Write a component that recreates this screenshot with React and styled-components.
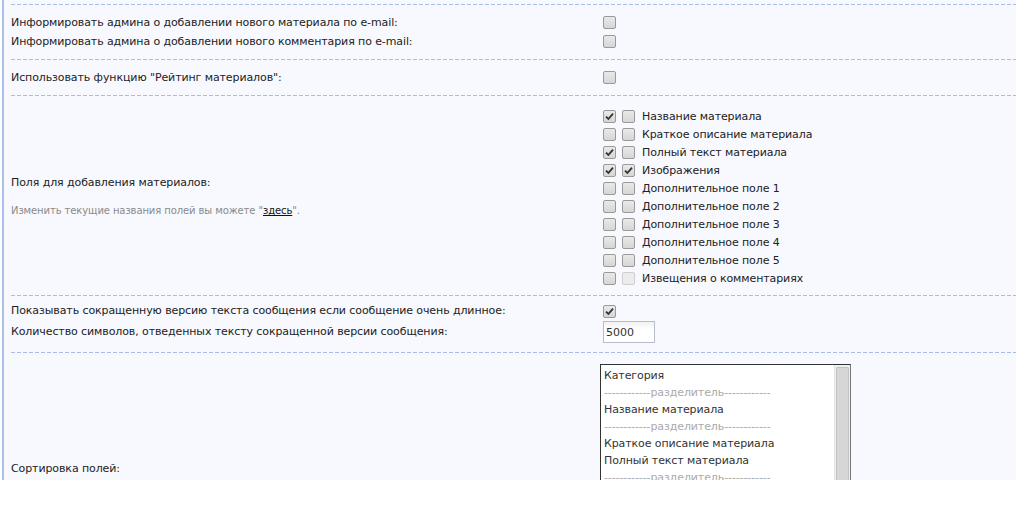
import styled, { createGlobalStyle } from "styled-components";

const Global = createGlobalStyle`
  html, body { margin: 0; padding: 0; background: #ffffff; }
  body {
    font-family: "DejaVu Sans", Verdana, sans-serif;
    font-size: 11px;
    letter-spacing: -0.1px;
    color: #222;
    overflow: hidden;
  }
`;

const Page = styled.div`
  margin-left: 2px;
  border-left: 2px solid #a9c0ea;
  background: #f7f9fe;
  padding-left: 7px;
  height: 480px;
  overflow: hidden;
  padding-top: 4px;
  box-sizing: border-box;
`;

const Section = styled.section`
  display: grid;
  grid-template-columns: 592px 1fr;
  align-items: center;
  padding: ${({ $pad }) => $pad || "9px 0 8px"};
  background-image: linear-gradient(to right, #a9bde8 4px, transparent 4px);
  background-size: 6px 1px;
  background-repeat: repeat-x;
  background-position: 0 0;
`;

const Row = styled.div`
  display: contents;
`;

const Label = styled.div`
  height: ${({ $h }) => $h || 19}px;
  line-height: ${({ $h }) => $h || 19}px;
  white-space: nowrap;
`;

const Cell = styled.div`
  height: ${({ $h }) => $h || 19}px;
  display: flex;
  align-items: center;
  gap: 6px;
`;

const LabelGroup = styled.div`
  display: flex;
  flex-direction: column;
  gap: 16px;
  margin-top: -2px;
`;

const Hint = styled.div`
  font-size: 10px;
  color: #8a8a8a;
  a { color: #111; text-decoration: underline; }
`;

const Box = styled.span`
  width: 11px;
  height: 11px;
  border: 1px solid ${({ $disabled }) => ($disabled ? "#cfcfcf" : "#9a9a9a")};
  border-radius: 2px;
  background: ${({ $disabled }) =>
    $disabled ? "#ececec" : "linear-gradient(#e9e9e9, #d6d6d6)"};
  display: inline-flex;
  align-items: center;
  justify-content: center;
  flex: none;
`;

const Check = ({ on, disabled }) => (
  <Box $disabled={disabled}>
    {on && (
      <svg width="9" height="9" viewBox="0 0 9 9">
        <path d="M1 4.6 L3.4 7 L8 1.6" fill="none" stroke="#333" strokeWidth="1.8" />
      </svg>
    )}
  </Box>
);

const List = styled.div`
  display: flex;
  flex-direction: column;
`;

const ListItem = styled.div`
  height: 18px;
  display: flex;
  align-items: center;
  gap: 6px;
  span.t { margin-left: 1px; white-space: nowrap; }
`;

const Input = styled.input`
  width: 46px;
  height: 18px;
  box-sizing: content-box;
  border: 1px solid #b7bccc;
  padding: 1px 2px;
  font: inherit;
  color: #333;
  background: linear-gradient(#f2f2f2, #ffffff 40%);
  outline: none;
`;

const SelectBox = styled.div`
  width: 249px;
  height: 206px;
  border: 1px solid #333;
  border-right-color: #777;
  border-bottom-color: #777;
  background: #fff;
  display: flex;
  margin-left: -3px;
`;

const Options = styled.div`
  flex: 1;
  padding: 2px 0 0 3px;
  overflow: hidden;
`;

const Option = styled.div`
  height: 17px;
  line-height: 17px;
  white-space: nowrap;
  color: ${({ $sep }) => ($sep ? "#aaa" : "#333")};
`;

const Scroll = styled.div`
  width: 16px;
  background: #f0f0f0;
  border-left: 1px solid #e2e2e2;
  padding: 2px 1px;
  box-sizing: border-box;
  display: flex;
`;

const Thumb = styled.div`
  flex: 1;
  background: #d6d6d6;
  border: 1px solid #c2c2c2;
  border-radius: 1px;
`;

const fields = [
  [true, false, "Название материала"],
  [false, false, "Краткое описание материала"],
  [true, false, "Полный текст материала"],
  [true, true, "Изображения"],
  [false, false, "Дополнительное поле 1"],
  [false, false, "Дополнительное поле 2"],
  [false, false, "Дополнительное поле 3"],
  [false, false, "Дополнительное поле 4"],
  [false, false, "Дополнительное поле 5"],
  [false, null, "Извещения о комментариях"],
];

const sep = "------------разделитель------------";
const order = [
  ["Категория"],
  [sep, true],
  ["Название материала"],
  [sep, true],
  ["Краткое описание материала"],
  ["Полный текст материала"],
  [sep, true],
  ["Изображения"],
  [sep, true],
  ["Дополнительное поле 1"],
  ["Дополнительное поле 2"],
  ["Дополнительное поле 3"],
];

export default function App() {
  return (
    <>
      <Global />
      <Page>
        <Section>
          <Row>
            <Label>Информировать админа о добавлении нового материала по e-mail:</Label>
            <Cell><Check /></Cell>
          </Row>
          <Row>
            <Label>Информировать админа о добавлении нового комментария по e-mail:</Label>
            <Cell><Check /></Cell>
          </Row>
        </Section>
        <Section>
          <Label>Использовать функцию "Рейтинг материалов":</Label>
          <Cell><Check /></Cell>
        </Section>
        <Section $pad="12px 0 8px">
          <LabelGroup>
            <div>Поля для добавления материалов:</div>
            <Hint>
              Изменить текущие названия полей вы можете "<a href="#">здесь</a>".
            </Hint>
          </LabelGroup>
          <List>
            {fields.map(([a, b, t]) => (
              <ListItem key={t}>
                <Check on={a} />
                <Check on={b} disabled={b === null} />
                <span className="t">{t}</span>
              </ListItem>
            ))}
          </List>
        </Section>
        <Section $pad="7px 0 8px">
          <Row>
            <Label $h={18}>Показывать сокращенную версию текста сообщения если сообщение очень длинное:</Label>
            <Cell $h={18}><Check on /></Cell>
          </Row>
          <Row>
            <Label $h={24}>Количество символов, отведенных тексту сокращенной версии сообщения:</Label>
            <Cell $h={24}><Input defaultValue="5000" /></Cell>
          </Row>
        </Section>
        <Section $pad="13px 0 0">
          <Label>Сортировка полей:</Label>
          <Cell $h={206}>
            <SelectBox>
              <Options>
                {order.map(([t, s], i) => (
                  <Option key={i} $sep={s}>{t}</Option>
                ))}
              </Options>
              <Scroll><Thumb /></Scroll>
            </SelectBox>
          </Cell>
        </Section>
      </Page>
    </>
  );
}
